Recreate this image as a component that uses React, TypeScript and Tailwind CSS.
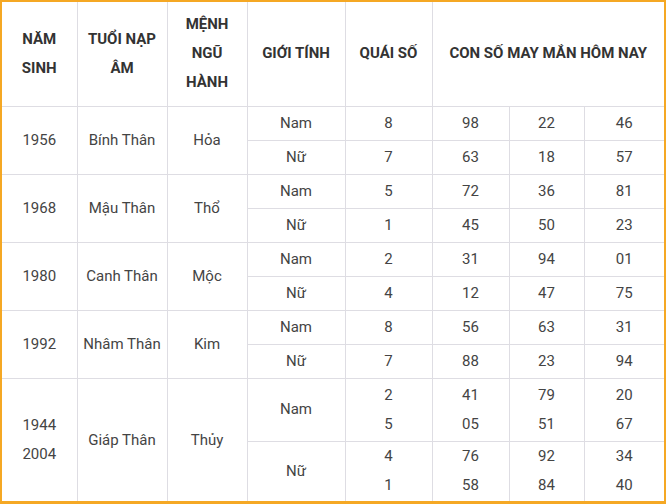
import React from 'react';

type Sub = { g: string; q: string[]; n: string[][]; h: string };
type Group = { year: string[]; nap: string; menh: string; subs: Sub[] };

const groups: Group[] = [
  {
    year: ['1956'],
    nap: 'Bính Thân',
    menh: 'Hỏa',
    subs: [
      { g: 'Nam', q: ['8'], n: [['98', '22', '46']], h: 'h-[34px]' },
      { g: 'Nữ', q: ['7'], n: [['63', '18', '57']], h: 'h-[34px]' },
    ],
  },
  {
    year: ['1968'],
    nap: 'Mậu Thân',
    menh: 'Thổ',
    subs: [
      { g: 'Nam', q: ['5'], n: [['72', '36', '81']], h: 'h-[34px]' },
      { g: 'Nữ', q: ['1'], n: [['45', '50', '23']], h: 'h-[34px]' },
    ],
  },
  {
    year: ['1980'],
    nap: 'Canh Thân',
    menh: 'Mộc',
    subs: [
      { g: 'Nam', q: ['2'], n: [['31', '94', '01']], h: 'h-[34px]' },
      { g: 'Nữ', q: ['4'], n: [['12', '47', '75']], h: 'h-[34px]' },
    ],
  },
  {
    year: ['1992'],
    nap: 'Nhâm Thân',
    menh: 'Kim',
    subs: [
      { g: 'Nam', q: ['8'], n: [['56', '63', '31']], h: 'h-[34px]' },
      { g: 'Nữ', q: ['7'], n: [['88', '23', '94']], h: 'h-[34px]' },
    ],
  },
  {
    year: ['1944', '2004'],
    nap: 'Giáp Thân',
    menh: 'Thủy',
    subs: [
      { g: 'Nam', q: ['2', '5'], n: [['41', '79', '20'], ['05', '51', '67']], h: 'h-[63px]' },
      { g: 'Nữ', q: ['4', '1'], n: [['76', '92', '34'], ['58', '84', '40']], h: 'h-[60px]' },
    ],
  },
];

const line = 'border-[#dedde3]';

function Lines({ items }: { items: string[] }) {
  return (
    <div className="flex flex-col items-center leading-[29px]">
      {items.map((t, i) => (
        <span key={i}>{t}</span>
      ))}
    </div>
  );
}

export default function App() {
  return (
    <div
      className="w-[666px] h-[504px] bg-white border-[#f5a824] border-t-2 border-l-2 border-r-2 border-b-[3px] overflow-hidden"
      style={{ fontFamily: 'Roboto, "Noto Sans", sans-serif' }}
    >
      <table className="w-[662px] table-fixed border-collapse text-[15px] text-[#444] text-center">
        <colgroup>
          <col className="w-[75px]" />
          <col className="w-[90px]" />
          <col className="w-[80px]" />
          <col className="w-[98px]" />
          <col className="w-[87px]" />
          <col className="w-[77px]" />
          <col className="w-[75px]" />
          <col className="w-[80px]" />
        </colgroup>
        <thead>
          <tr className="h-[104px] text-[#333] font-bold leading-[29px]">
            <th className={`border-r border-b ${line} font-bold`}>
              NĂM
              <br />
              SINH
            </th>
            <th className={`border-r border-b ${line} font-bold`}>
              TUỔI NẠP
              <br />
              ÂM
            </th>
            <th className={`border-r border-b ${line} font-bold`}>
              MỆNH
              <br />
              NGŨ
              <br />
              HÀNH
            </th>
            <th className={`border-r border-b ${line} font-bold`}>GIỚI TÍNH</th>
            <th className={`border-r border-b ${line} font-bold`}>QUÁI SỐ</th>
            <th colSpan={3} className={`border-b ${line} font-bold whitespace-nowrap`}>
              CON SỐ MAY MẮN HÔM NAY
            </th>
          </tr>
        </thead>
        <tbody>
          {groups.map((grp, gi) => {
            const last = gi === groups.length - 1;
            const b = last ? '' : 'border-b';
            return grp.subs.map((s, si) => {
              const sb = last && si === 1 ? '' : 'border-b';
              return (
                <tr key={`${gi}-${si}`} className={s.h}>
                  {si === 0 && (
                    <>
                      <td rowSpan={2} className={`border-r ${b} ${line}`}>
                        <Lines items={grp.year} />
                      </td>
                      <td rowSpan={2} className={`border-r ${b} ${line} whitespace-nowrap`}>
                        {grp.nap}
                      </td>
                      <td rowSpan={2} className={`border-r ${b} ${line}`}>
                        {grp.menh}
                      </td>
                    </>
                  )}
                  <td className={`border-r ${sb} ${line}`}>{s.g}</td>
                  <td className={`border-r ${sb} ${line}`}>
                    <Lines items={s.q} />
                  </td>
                  {[0, 1, 2].map((c) => (
                    <td key={c} className={`${c < 2 ? 'border-r' : ''} ${sb} ${line}`}>
                      <Lines items={s.n.map((r) => r[c])} />
                    </td>
                  ))}
                </tr>
              );
            });
          })}
        </tbody>
      </table>
    </div>
  );
}
